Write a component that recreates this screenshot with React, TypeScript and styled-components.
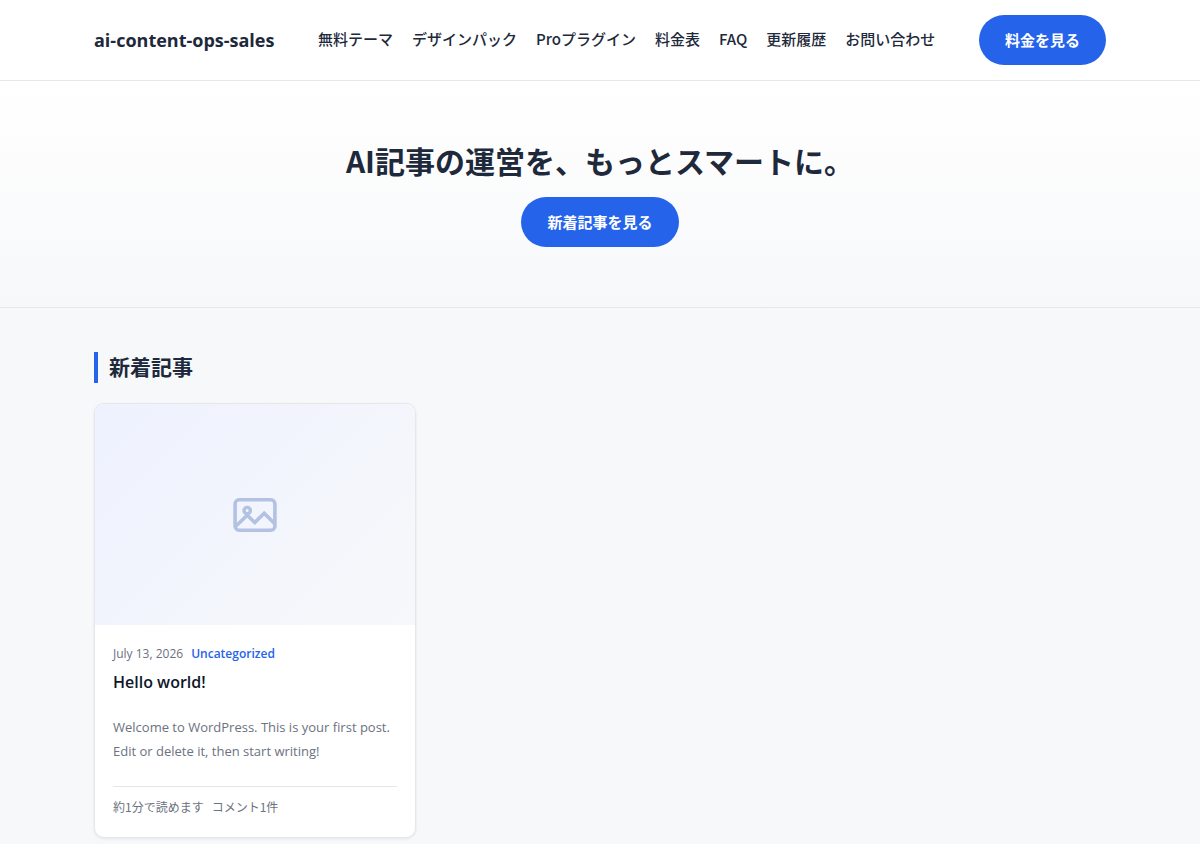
import React from "react";
import styled, { createGlobalStyle, css } from "styled-components";

const color = {
  text: "#1e293b",
  ink: "#0f172a",
  muted: "#6b7280",
  primary: "#2563eb",
  border: "#e5e7eb",
  page: "#f7f8fa",
};

const latin = `"Open Sans", "Noto Sans CJK JP", sans-serif`;
const japanese = `"Noto Sans CJK JP", sans-serif`;

const GlobalStyle = createGlobalStyle`
  *, *::before, *::after { box-sizing: border-box; }
  body {
    margin: 0;
    background: ${color.page};
    color: ${color.text};
    font-family: ${latin};
    font-size: 15px;
  }
  h1, h2, h3, p, ul { margin: 0; padding: 0; }
  a { color: inherit; text-decoration: none; }
`;

const container = css`
  width: 100%;
  max-width: 1060px;
  margin: 0 auto;
  padding-left: 24px;
  padding-right: 24px;
`;

const Header = styled.header`
  background: #fff;
  border-bottom: 1px solid ${color.border};
`;

const HeaderInner = styled.div`
  ${container}
  display: flex;
  align-items: center;
  justify-content: space-between;
  flex-wrap: wrap;
  gap: 16px;
  padding-top: 15px;
  padding-bottom: 15px;
`;

const Brand = styled.a`
  font-size: 18px;
  line-height: 26px;
  font-weight: 700;
`;

const NavList = styled.ul`
  display: flex;
  flex-wrap: wrap;
  gap: 8px 19px;
  list-style: none;
`;

const NavLink = styled.a`
  display: block;
  padding-bottom: 2px;
  font-family: ${japanese};
  font-size: 15px;
  line-height: 24px;
  font-weight: 500;
  white-space: nowrap;
`;

const PillLink = styled.a`
  display: inline-block;
  padding: 13px 26px;
  border-radius: 25px;
  background: ${color.primary};
  color: #fff;
  font-family: ${japanese};
  font-size: 15px;
  line-height: 24px;
  font-weight: 700;
  white-space: nowrap;
`;

const Hero = styled.section`
  display: flex;
  flex-direction: column;
  align-items: center;
  gap: 16px;
  padding: 58px 24px 60px;
  text-align: center;
  background: linear-gradient(180deg, #fff, ${color.page});
  border-bottom: 1px solid ${color.border};
`;

const HeroTitle = styled.h1`
  font-family: ${japanese};
  font-size: 30px;
  line-height: 42px;
  font-weight: 700;
`;

const Main = styled.main`
  ${container}
  padding-top: 44px;
  padding-bottom: 44px;
`;

const SectionTitle = styled.h2`
  margin-bottom: 20px;
  padding: 0 0 2px 11px;
  border-left: 4px solid ${color.primary};
  font-family: ${japanese};
  font-size: 21px;
  line-height: 29px;
  font-weight: 700;
`;

const PostGrid = styled.div`
  display: grid;
  grid-template-columns: repeat(auto-fill, minmax(280px, 1fr));
  gap: 23px;
`;

const Card = styled.article`
  overflow: hidden;
  background: #fff;
  border: 1px solid ${color.border};
  border-radius: 10px;
  box-shadow: 0 1px 3px rgba(15, 23, 42, 0.08);
`;

const Thumbnail = styled.a`
  display: flex;
  align-items: center;
  justify-content: center;
  height: 221px;
  background: linear-gradient(135deg, #eef2ff, ${color.page});
`;

const CardBody = styled.div`
  padding: 18px 18px 20px;
`;

const Meta = styled.div`
  display: flex;
  gap: 8px;
  color: ${color.muted};
  font-size: 12px;
  line-height: 21px;
`;

const Category = styled.a`
  color: ${color.primary};
  font-weight: 600;
`;

const CardTitle = styled.h3`
  margin-top: 6px;
  color: ${color.ink};
  font-size: 16px;
  line-height: 24px;
  font-weight: 600;
`;

const Excerpt = styled.p`
  margin-top: 21px;
  color: ${color.muted};
  font-size: 13px;
  line-height: 24px;
`;

const CardFooter = styled.footer`
  display: flex;
  gap: 8px;
  margin-top: 23px;
  padding-top: 10px;
  border-top: 1px solid ${color.border};
  color: ${color.muted};
  font-family: ${japanese};
  font-size: 12px;
  line-height: 20px;
`;

const navItems = [
  "無料テーマ",
  "デザインパック",
  "Proプラグイン",
  "料金表",
  "FAQ",
  "更新履歴",
  "お問い合わせ",
];

function PictureIcon() {
  return (
    <svg width="44" height="34" viewBox="0 0 44 34" fill="none" stroke="#b3c1e2" strokeWidth="3.6" aria-hidden="true">
      <rect x="2.1" y="1.8" width="39.8" height="30.4" rx="4" />
      <circle cx="14.2" cy="12.6" r="3.2" strokeWidth="3.4" />
      <path d="M2.5 28.5 14.2 17.2 21.8 24.6 31.2 15.3 42 26" />
    </svg>
  );
}

export default function App() {
  return (
    <>
      <GlobalStyle />
      <Header>
        <HeaderInner>
          <Brand href="#">ai-content-ops-sales</Brand>
          <nav>
            <NavList>
              {navItems.map((item) => (
                <li key={item}>
                  <NavLink href="#">{item}</NavLink>
                </li>
              ))}
            </NavList>
          </nav>
          <PillLink href="#">料金を見る</PillLink>
        </HeaderInner>
      </Header>
      <Hero>
        <HeroTitle>AI記事の運営を、もっとスマートに。</HeroTitle>
        <PillLink href="#latest">新着記事を見る</PillLink>
      </Hero>
      <Main id="latest">
        <SectionTitle>新着記事</SectionTitle>
        <PostGrid>
          <Card>
            <Thumbnail href="#" aria-label="Hello world!">
              <PictureIcon />
            </Thumbnail>
            <CardBody>
              <Meta>
                <time dateTime="2026-07-13">July 13, 2026</time>
                <Category href="#">Uncategorized</Category>
              </Meta>
              <CardTitle>
                <a href="#">Hello world!</a>
              </CardTitle>
              <Excerpt>Welcome to WordPress. This is your first post. Edit or delete it, then start writing!</Excerpt>
              <CardFooter>
                <span>約1分で読めます</span>
                <span>コメント1件</span>
              </CardFooter>
            </CardBody>
          </Card>
        </PostGrid>
      </Main>
    </>
  );
}
